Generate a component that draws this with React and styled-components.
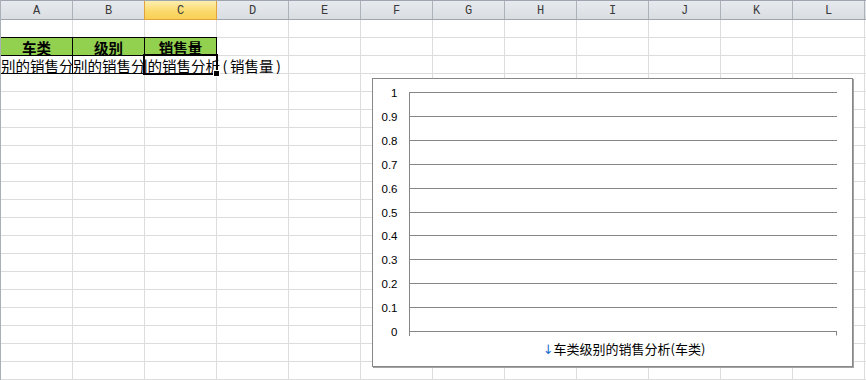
import React from 'react';
import styled, { createGlobalStyle, css } from 'styled-components';

const GlobalStyle = createGlobalStyle`
  html, body { margin: 0; padding: 0; background: #ffffff; overflow: hidden; }
  body { font-family: "Noto Sans CJK SC", sans-serif; }
  #root { width: 866px; height: 380px; }
`;

const COLS = ['A', 'B', 'C', 'D', 'E', 'F', 'G', 'H', 'I', 'J', 'K', 'L'];
const ROW_COUNT = 20;

const Sheet = styled.div`
  position: relative;
  width: 866px;
  height: 380px;
  overflow: hidden;
  box-sizing: border-box;
  border-left: 1px solid #a9b0b8;
  background: #ffffff;
`;

const HeaderBar = styled.div`
  display: flex;
  height: 20px;
  box-sizing: border-box;
  border-top: 1px solid #9ea5ae;
  border-bottom: 1px solid #9ea5ae;
  background: linear-gradient(#e6e9ed, #dadee3);
`;

const ColHeader = styled.div`
  flex: none;
  width: 72px;
  box-sizing: border-box;
  border-right: 1px solid #abb2ba;
  display: flex;
  align-items: center;
  justify-content: center;
  padding-top: 2px;
  font-family: "Liberation Mono", monospace;
  font-size: 12px;
  color: #3a3a3a;
  ${(p) =>
    p.$selected &&
    css`
      background: linear-gradient(#fdeeb0, #fbd869 60%, #f8d055);
      border-right-color: #e2a33d;
      box-shadow: -1px 0 0 #e2a33d, 0 1px 0 #e2a33d, -1px 1px 0 #e2a33d;
    `}
`;

const Filler = styled.div`
  flex: 1;
`;

const GridRow = styled.div`
  display: flex;
  height: 18px;
`;

const Cell = styled.div`
  flex: none;
  width: 72px;
  height: 18px;
  box-sizing: border-box;
  border-right: 1px solid #dadcdd;
  border-bottom: 1px solid #dadcdd;
  font-size: 14.5px;
  line-height: 17px;
  white-space: nowrap;
  color: #000;
  ${(p) =>
    p.$variant === 'head' &&
    css`
      background: #92d050;
      border-right-color: #000;
      border-bottom-color: #000;
      box-shadow: 0 -1px 0 #000;
      font-weight: bold;
      text-align: center;
      padding-top: 1px;
    `}
  ${(p) =>
    p.$variant === 'ruled' &&
    css`
      border-right-color: #000;
      border-bottom-color: #000;
      overflow: hidden;
      padding-top: 1px;
    `}
  ${(p) =>
    p.$variant === 'active' &&
    css`
      position: relative;
      z-index: 1;
      border-bottom-color: #000;
      padding-top: 1px;
    `}
`;

const FillCell = styled(Cell)`
  flex: 1;
  width: auto;
  border-right: none;
`;

const CellText = styled.span`
  display: inline-block;
  margin-left: ${(p) => p.$shift || 0}px;
`;

const OverflowText = styled.span`
  display: inline-block;
  margin-left: -12px;
  clip-path: polygon(12px 0, 400px 0, 400px 100%, 12px 100%);
`;

const Paren = styled.span`
  display: inline-block;
  width: 10px;
  text-align: center;
`;

const SelectionFrame = styled.div`
  position: absolute;
  left: -2px;
  top: -2px;
  width: 75px;
  height: 21px;
  box-sizing: border-box;
  border: 2px solid #000;
  pointer-events: none;
`;

const FillHandle = styled.div`
  position: absolute;
  right: -3px;
  bottom: -3px;
  width: 5px;
  height: 5px;
  background: #000;
  box-shadow: 0 0 0 1px #fff;
`;

const ChartFrame = styled.div`
  position: absolute;
  left: 371px;
  top: 78px;
  width: 481px;
  height: 289px;
  box-sizing: border-box;
  border: 1px solid #878787;
  box-shadow: 1px 1px 0 #a3a3a3;
  background: #ffffff;
`;

const ChartSvg = styled.svg`
  display: block;
  font-family: "Liberation Sans", "Noto Sans CJK SC", sans-serif;
`;

const TICKS = ['1', '0.9', '0.8', '0.7', '0.6', '0.5', '0.4', '0.3', '0.2', '0.1', '0'];

function Chart() {
  return (
    <ChartFrame>
      <ChartSvg width="479" height="287" viewBox="0 0 479 287">
        {TICKS.map((t, i) => {
          const y = Math.round(13 + i * 23.9) + 0.5;
          return (
            <g key={t}>
              <line x1="36" x2="464" y1={y} y2={y} stroke="#868686" strokeWidth="1" />
              <text x="24.5" y={y + 4} textAnchor="end" fontSize="11.5" fill="#000">
                {t}
              </text>
            </g>
          );
        })}
        <line x1="36.5" x2="36.5" y1="13" y2="257" stroke="#868686" strokeWidth="1" />
        <line x1="463.5" x2="463.5" y1="252" y2="256.5" stroke="#868686" strokeWidth="1" />
        <text x="251" y="275" textAnchor="middle" fontSize="13" fill="#000">
          <tspan fill="#1f6fd0" fontFamily="DejaVu Sans, sans-serif">↓</tspan>
          <tspan fontFamily="Noto Sans CJK SC, sans-serif">车类级别的销售分析(车类)</tspan>
        </text>
      </ChartSvg>
    </ChartFrame>
  );
}

const HEAD_LABELS = ['车类', '级别', '销售量'];

function renderCell(r, c) {
  if (r === 1 && c < 3) {
    return (
      <Cell key={c} $variant="head">
        {HEAD_LABELS[c]}
      </Cell>
    );
  }
  if (r === 2 && c < 2) {
    return (
      <Cell key={c} $variant="ruled">
        <CellText $shift={0}>别的销售分析</CellText>
      </Cell>
    );
  }
  if (r === 2 && c === 2) {
    return (
      <Cell key={c} $variant="active">
        <OverflowText>
          别的销售分析<Paren>(</Paren>销售量<Paren>)</Paren>
        </OverflowText>
        <SelectionFrame>
          <FillHandle />
        </SelectionFrame>
      </Cell>
    );
  }
  return <Cell key={c} />;
}

export default function App() {
  return (
    <>
      <GlobalStyle />
      <Sheet>
        <HeaderBar>
          {COLS.map((c) => (
            <ColHeader key={c} $selected={c === 'C'}>
              {c}
            </ColHeader>
          ))}
          <Filler />
        </HeaderBar>
        {Array.from({ length: ROW_COUNT }, (_, r) => (
          <GridRow key={r}>
            {COLS.map((_, c) => renderCell(r, c))}
            <FillCell />
          </GridRow>
        ))}
        <Chart />
      </Sheet>
    </>
  );
}
